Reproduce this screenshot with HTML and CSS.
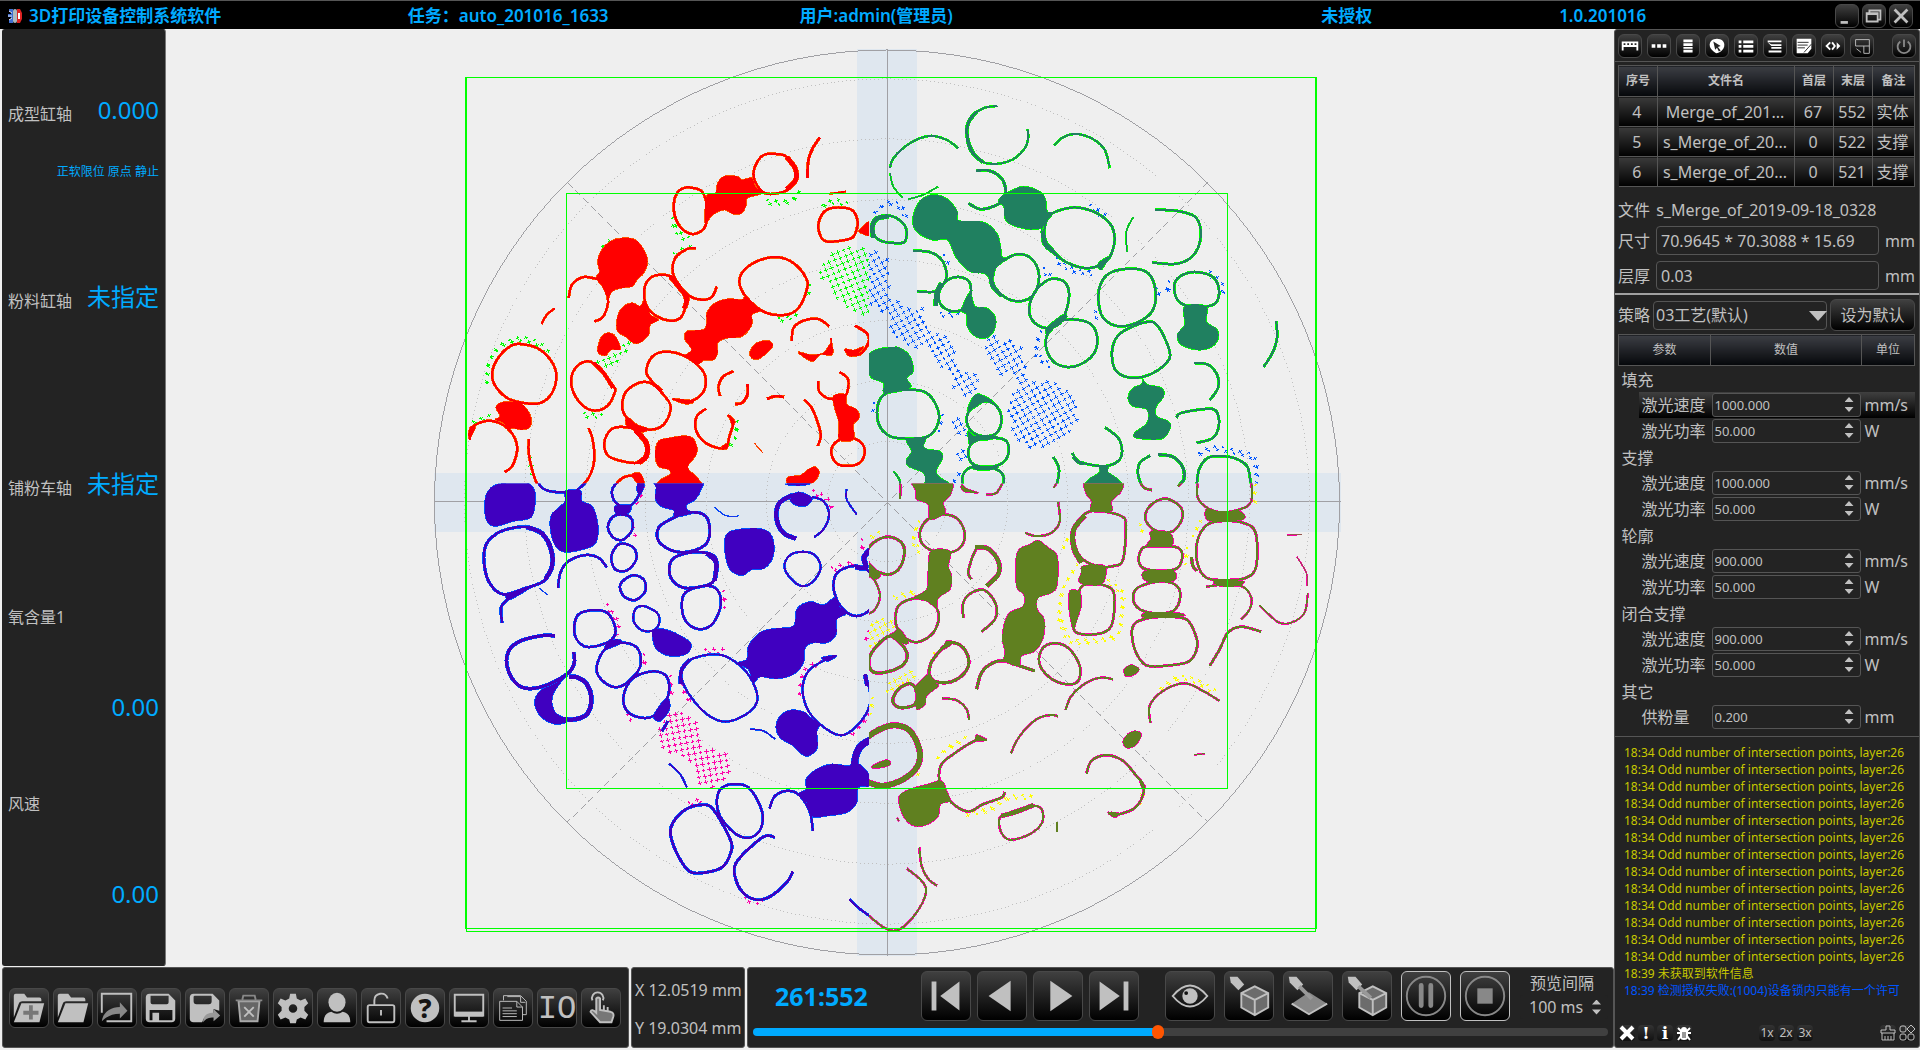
FILE: index.html
```
<!DOCTYPE html>
<html lang="zh-CN">
  <head>
    <meta charset="UTF-8" />
    <meta name="viewport" content="width=device-width, initial-scale=1.0" />
    <title>3D打印设备控制系统软件</title>
    <link rel="stylesheet" href="styles.css">
  </head>
  <body>
    <header class="titlebar">
      <svg class="logo" viewBox="0 0 16 16">
        <path d="M6 1H2v3h2v2H1v3h3v2H2v4h4z" fill="#3f6fd0" />
        <path d="M2 3l3 2M1 8h4M2 12l3-2" stroke="#dde" />
        <rect x="6" y="1" width="4" height="14" rx="2" fill="#aeb9bd" />
        <path d="M10 1h3l2 4v6l-2 4h-3z" fill="#d22" />
        <path d="M11 5h2v6h-2z" fill="#fff" />
      </svg>
      <h1 class="app-name">3D打印设备控制系统软件</h1>
      <span class="task">任务：auto_201016_1633</span>
      <span class="user">用户:admin(管理员)</span>
      <span class="licence">未授权</span>
      <span class="version">1.0.201016</span>
      <div class="window-buttons">
        <button class="btn small" aria-label="最小化"><svg viewBox="0 0 24 24"><path d="M5 19h8" class="line thick" /></svg></button>
        <button class="btn small" aria-label="还原"><svg viewBox="0 0 24 24"><path d="M4 9h12v9H4zM4 10h12M7 8V6h12v10h-2" class="line" /></svg></button>
        <button class="btn small" aria-label="关闭"><svg viewBox="0 0 24 24"><path d="M5 5l14 14M19 5L5 19" class="line thick" /></svg></button>
      </div>
    </header>

    <main class="workspace">
      <section class="axes panel">
        <div class="axis">
          <div class="axis-row"><span>成型缸轴</span><strong>0.000</strong></div>
          <p class="axis-state">正软限位 原点 静止</p>
        </div>
        <div class="axis">
          <div class="axis-row"><span>粉料缸轴</span><strong>未指定</strong></div>
        </div>
        <div class="axis">
          <div class="axis-row"><span>铺粉车轴</span><strong>未指定</strong></div>
        </div>
        <div class="sensor"><span>氧含量1</span><strong>0.00</strong></div>
        <div class="sensor"><span>风速</span><strong>0.00</strong></div>
      </section>

      <section class="view">
        <svg id="slice" viewBox="166 29 1448 939">
          <defs>
            <clipPath id="clip-tl"><rect x="400" y="40" width="469" height="444" /></clipPath>
            <clipPath id="clip-tr"><rect x="869" y="40" width="500" height="444" /></clipPath>
            <clipPath id="clip-bl"><rect x="400" y="484" width="469" height="480" /></clipPath>
            <clipPath id="clip-br"><rect x="869" y="484" width="500" height="480" /></clipPath>
          </defs>
          <rect class="band" x="857" y="49" width="60" height="908" />
          <rect class="band" x="434" y="473" width="907" height="60" />
          <g class="guides">
            <circle cx="887" cy="503" r="453" />
            <path d="M887.5 50v907M434 502.5h907" />
            <path class="dashed" d="M567 183l641 640M1208 183L567 823" />
            <g class="dotted">
              <circle cx="887" cy="502" r="60" />
              <circle cx="887" cy="502" r="121" />
              <circle cx="887" cy="502" r="181" />
              <circle cx="887" cy="502" r="242" />
              <circle cx="887" cy="502" r="302" />
              <circle cx="887" cy="502" r="363" />
              <circle cx="887" cy="502" r="423" />
            </g>
          </g>
          <g id="layers"></g>
          <g class="bounds">
            <path d="M566.5 193.5h661v596h-661z" />
            <path d="M465.5 77.5h851v852h-851z" />
            <path d="M466.5 77.5h849v855h-849z" />
          </g>
        </svg>
      </section>

      <aside class="side panel">
        <div class="side-tools">
          <button class="btn small" aria-label="标尺"><svg viewBox="0 0 24 24"><path d="M4 17V8h16v9M4 12h16M8 9v3M12 9v3M16 9v3" class="line white" /></svg></button>
          <button class="btn small" aria-label="横排"><svg viewBox="0 0 24 24"><path d="M4 10h4v4H4zM10 10h4v4h-4zM16 10h4v4h-4z" class="solid white" /></svg></button>
          <button class="btn small" aria-label="竖排"><svg viewBox="0 0 24 24"><path d="M7 5h10v3H7zM7 9h10v3H7zM7 13h10v2H7zM7 16h10v3H7z" class="solid white" /></svg></button>
          <button class="btn small" aria-label="拾取"><svg viewBox="0 0 24 24"><path d="M12 4c5 0 8 3 8 7 0 5-5 9-9 9-3-2-7-5-7-9s3-7 8-7z" class="solid white" /><path d="M8 7l8 5-3 1 3 4-2 1-2-4-2 2z" fill="#222" /></svg></button>
          <button class="btn small" aria-label="列表"><svg viewBox="0 0 24 24"><path d="M4 6h3v3H4zM9 6h11v3H9zM4 11h3v3H4zM9 11h11v3H9zM4 16h3v3H4zM9 16h11v3H9z" class="solid white" /></svg></button>
          <button class="btn small" aria-label="层级"><svg viewBox="0 0 24 24"><path d="M4 6h15v2H4zM8 10h11v2H8zM8 13h11v2H8zM5 17h14v2H5zM4 8l4 2v2z" class="solid white" /></svg></button>
          <button class="btn small" aria-label="记录"><svg viewBox="0 0 24 24"><path d="M4 4h16v11l-4 5H4z" class="solid white" /><path d="M5 8h12M5 11h11M5 14h8M20 10l-8 9" stroke="#222" stroke-width="1" /></svg></button>
          <button class="btn small" aria-label="切换"><svg viewBox="0 0 24 24"><path d="M9 8l-4 4 4 4M11 8l3 4-3 4" class="line white" /><path d="M16 8l4 4-4 4z" class="solid white" /></svg></button>
          <button class="btn small" aria-label="布局"><svg viewBox="0 0 24 24"><path d="M5 5h15v7H5zM14 12v8h6v-8M6 15l5 4" class="line thin" /></svg></button>
          <button class="btn small power" aria-label="电源"><svg viewBox="0 0 24 24"><path d="M12 5v8M8 7a7 7 0 1 0 8 0" class="line dim" /></svg></button>
        </div>

        <div class="files">
          <table class="file-table">
            <thead>
              <tr><th class="c-no">序号</th><th>文件名</th><th class="c-layer">首层</th><th class="c-layer">末层</th><th class="c-note">备注</th></tr>
            </thead>
            <tbody>
              <tr><td>4</td><td>Merge_of_201...</td><td>67</td><td>552</td><td>实体</td></tr>
              <tr><td>5</td><td>s_Merge_of_20...</td><td>0</td><td>522</td><td>支撑</td></tr>
              <tr><td>6</td><td>s_Merge_of_20...</td><td>0</td><td>521</td><td>支撑</td></tr>
            </tbody>
          </table>
          <p class="file-name"><span>文件</span> s_Merge_of_2019-09-18_0328</p>
          <div class="field"><label for="size">尺寸</label><input id="size" type="text" value="70.9645 * 70.3088 * 15.69"><span>mm</span></div>
          <div class="field"><label for="thickness">层厚</label><input id="thickness" type="text" value="0.03"><span>mm</span></div>
        </div>

        <div class="strategy">
          <div class="strategy-row">
            <label for="profile">策略</label>
            <span class="select"><select id="profile"><option>03工艺(默认)</option></select></span>
            <button class="btn default-btn">设为默认</button>
          </div>
          <table class="params">
            <thead>
              <tr><th class="c-param">参数</th><th>数值</th><th class="c-unit">单位</th></tr>
            </thead>
            <tbody>
              <tr class="group"><td colspan="3">填充</td></tr>
              <tr class="selected"><td><label for="p1">激光速度</label></td><td><span class="spin"><input id="p1" type="number" step="any" value="1000.000"><i></i></span></td><td>mm/s</td></tr>
              <tr><td><label for="p2">激光功率</label></td><td><span class="spin"><input id="p2" type="number" step="any" value="50.000"><i></i></span></td><td>W</td></tr>
              <tr class="group"><td colspan="3">支撑</td></tr>
              <tr><td><label for="p3">激光速度</label></td><td><span class="spin"><input id="p3" type="number" step="any" value="1000.000"><i></i></span></td><td>mm/s</td></tr>
              <tr><td><label for="p4">激光功率</label></td><td><span class="spin"><input id="p4" type="number" step="any" value="50.000"><i></i></span></td><td>W</td></tr>
              <tr class="group"><td colspan="3">轮廓</td></tr>
              <tr><td><label for="p5">激光速度</label></td><td><span class="spin"><input id="p5" type="number" step="any" value="900.000"><i></i></span></td><td>mm/s</td></tr>
              <tr><td><label for="p6">激光功率</label></td><td><span class="spin"><input id="p6" type="number" step="any" value="50.000"><i></i></span></td><td>W</td></tr>
              <tr class="group"><td colspan="3">闭合支撑</td></tr>
              <tr><td><label for="p7">激光速度</label></td><td><span class="spin"><input id="p7" type="number" step="any" value="900.000"><i></i></span></td><td>mm/s</td></tr>
              <tr><td><label for="p8">激光功率</label></td><td><span class="spin"><input id="p8" type="number" step="any" value="50.000"><i></i></span></td><td>W</td></tr>
              <tr class="group"><td colspan="3">其它</td></tr>
              <tr><td><label for="p9">供粉量</label></td><td><span class="spin"><input id="p9" type="number" step="any" value="0.200"><i></i></span></td><td>mm</td></tr>
            </tbody>
          </table>
        </div>

        <div class="log">
          <ul>
            <li>18:34 Odd number of intersection points, layer:26</li>
            <li>18:34 Odd number of intersection points, layer:26</li>
            <li>18:34 Odd number of intersection points, layer:26</li>
            <li>18:34 Odd number of intersection points, layer:26</li>
            <li>18:34 Odd number of intersection points, layer:26</li>
            <li>18:34 Odd number of intersection points, layer:26</li>
            <li>18:34 Odd number of intersection points, layer:26</li>
            <li>18:34 Odd number of intersection points, layer:26</li>
            <li>18:34 Odd number of intersection points, layer:26</li>
            <li>18:34 Odd number of intersection points, layer:26</li>
            <li>18:34 Odd number of intersection points, layer:26</li>
            <li>18:34 Odd number of intersection points, layer:26</li>
            <li>18:34 Odd number of intersection points, layer:26</li>
            <li>18:39 未获取到软件信息</li>
            <li class="info">18:39 检测授权失败:(1004)设备锁内只能有一个许可</li>
          </ul>
          <div class="log-tools">
            <button class="mini" aria-label="错误"><svg viewBox="0 0 16 16"><path d="M2 2l12 12M14 2L2 14" stroke="#fff" stroke-width="4" /></svg></button>
            <button class="mini mark">!</button>
            <button class="mini mark">i</button>
            <button class="mini bug" aria-label="调试"><svg viewBox="0 0 16 16"><path d="M1 8h14M2 3l3 3h6l3-3M2 15l3-4h6l3 4" class="line white" /><path d="M5 5a3 3 0 0 1 6 0zM4 6h8v6q0 3-4 3t-4-3z" class="solid white" /><path d="M7 7v6M9 7v6" stroke="#333" /></svg></button>
            <button class="mini">1x</button>
            <button class="mini">2x</button>
            <button class="mini zoom-last">3x</button>
            <button class="mini" aria-label="清空"><svg viewBox="0 0 16 16"><path d="M1 8V5h5V1h4v4h5v3zM2 8v7h12V8M5 11v4M8 11v4M11 11v4" class="line thin" /></svg></button>
            <button class="mini" aria-label="更多"><svg viewBox="0 0 16 16"><rect x="1" y="1" width="6" height="6" rx="2" class="line thin" /><path d="M12 0l4 4-4 4-4-4z" class="line thin" /><rect x="1" y="9" width="6" height="6" rx="2" class="line thin" /><rect x="9" y="9" width="6" height="6" rx="2" class="line thin" /></svg></button>
          </div>
        </div>
      </aside>

      <footer class="bottom">
        <nav class="toolbar panel">
          <button class="btn" aria-label="新建任务"><svg viewBox="0 0 40 40"><path d="M4 30V7q0-2 2-2h9l3 4h13q2 0 2 2v2H13q-3 0-4 3z" class="solid" /><path d="M12 15h24l-5 20H4z" class="solid" /><path d="M22 17v15M14 25h16" stroke="#777" stroke-width="4" /></svg></button>
          <button class="btn" aria-label="打开任务"><svg viewBox="0 0 40 40"><path d="M4 30V7q0-2 2-2h9l3 4h13q2 0 2 2v2H13q-3 0-4 3z" class="solid" /><path d="M12 15h24l-5 20H4z" class="solid" /></svg></button>
          <button class="btn" aria-label="导入"><svg viewBox="0 0 40 40"><path d="M4 25V5h31v29H9" class="line" /><path d="M4 34c1-9 9-15 19-15v-5l8 9-8 8v-5c-8 0-14 3-19 8z" fill="#888" /></svg></button>
          <button class="btn" aria-label="保存"><svg viewBox="0 0 40 40"><path d="M8 5h20l7 7v19q0 4-4 4H8q-4 0-4-4V9q0-4 4-4zm1 2v7q0 2 2 2h15q2 0 2-2V7zM8 22v11h3v-8h7v8h14V22z" fill-rule="evenodd" class="solid" /></svg></button>
          <button class="btn" aria-label="另存为"><svg viewBox="0 0 40 40"><path d="M8 5h20l7 7v11l-6-2v5q-9 0-12 9H8q-4 0-4-4V9q0-4 4-4zm0 3v5q0 3 3 3h13q3 0 3-3V8q0-1-1-1H9z" fill-rule="evenodd" class="solid" /><path d="M18 35c0-7 4-10 11-10v-4l7 7-7 6v-4c-5 0-8 1-11 5z" fill="#999" /></svg></button>
          <button class="btn" aria-label="删除"><svg viewBox="0 0 40 40"><path d="M9 13h22l-2 21H11z" fill="#666" stroke="#aaa" stroke-width="2" /><path d="M6 12h28M13 11l1-4h12l1 4" class="line dim" /><path d="M15 19l10 10M25 19L15 29" class="line" /></svg></button>
          <button class="btn" aria-label="设置"><svg viewBox="0 0 40 40"><path d="M17 5h6l1 5 4 2 5-2 3 5-4 4v4l4 4-3 5-5-2-4 2-1 4h-6l-1-4-4-2-5 2-3-5 4-4v-4l-4-4 3-5 5 2 4-2zM20 16a4 4 0 1 0 0 9 4 4 0 0 0 0-9z" fill-rule="evenodd" class="solid" /></svg></button>
          <button class="btn" aria-label="用户"><svg viewBox="0 0 40 40"><ellipse cx="20" cy="14" rx="9" ry="10" class="solid" /><path d="M6 35c0-7 3-10 8-11q6 4 12 0c5 1 8 4 8 11z" class="solid" /></svg></button>
          <button class="btn" aria-label="解锁"><svg viewBox="0 0 40 40"><rect x="6" y="17" width="28" height="18" rx="2" class="line" /><path d="M13 17v-5q0-6 6-7t8 5M20 22v6" class="line" /></svg></button>
          <button class="btn" aria-label="帮助"><svg viewBox="0 0 40 40"><circle cx="20" cy="20" r="15" class="solid" /><text x="20" y="30" class="glyph help">?</text></svg></button>
          <button class="btn" aria-label="监控"><svg viewBox="0 0 40 40"><path d="M5 6h30v22H5zM5 25h30M20 28v6M12 34h16" class="line" /><path d="M5 24h30v5H5z" class="solid" /></svg></button>
          <button class="btn" aria-label="日志"><svg viewBox="0 0 40 40"><path d="M10 12V7h18l6 6v14h-4M14 8h14v6h5" class="line thin" /><path d="M6 13h18l6 6v14H6zM24 13v6h6M9 20h10M9 23h15M9 26h15M9 29h15" class="line thin" /></svg></button>
          <button class="btn" aria-label="输入输出"><svg viewBox="0 0 40 40"><text x="20" y="31" class="glyph io">IO</text></svg></button>
          <button class="btn" aria-label="手动"><svg viewBox="0 0 40 40"><path d="M11 12a6 6 0 1 1 11 0" class="line" /><path d="M15 10q2-2 4 0v12l11 2q4 1 3 5l-2 6H19L9 24q1-4 6 1z" fill="#777" stroke="#c0c0c0" stroke-width="2" /><path d="M23 17v6M27 19v5" class="line" /></svg></button>
        </nav>
        <section class="coords panel">
          <span>X 12.0519 mm</span>
          <span>Y 19.0304 mm</span>
        </section>
        <section class="player panel">
          <div class="player-row">
            <output class="layer">261:552</output>
            <div class="play-group steps">
              <button class="btn big" aria-label="首层"><svg viewBox="0 0 50 50"><path d="M10 10h5v30h-5zM39 10v30L19 25z" class="solid" /></svg></button>
              <button class="btn big" aria-label="上一层"><svg viewBox="0 0 50 50"><path d="M34 9v32L11 25z" class="solid" /></svg></button>
              <button class="btn big" aria-label="下一层"><svg viewBox="0 0 50 50"><path d="M17 9v32l23-16z" class="solid" /></svg></button>
              <button class="btn big" aria-label="末层"><svg viewBox="0 0 50 50"><path d="M10 10v30l21-15zM35 10h5v30h-5z" class="solid" /></svg></button>
            </div>
            <div class="play-group modes">
              <button class="btn big" aria-label="预览"><svg viewBox="0 0 50 50"><path d="M7 25Q25 3 43 25 25 47 7 25z" class="line" /><circle cx="25" cy="25" r="8" class="solid" /><circle cx="21" cy="22" r="2" fill="#111" /></svg></button>
              <button class="btn big" aria-label="扫描实体"><svg viewBox="0 0 50 50"><path d="M5 5h8l7 8-6 6-8-8z" class="solid" /><path d="M17 22l14-7 14 7v15l-14 8-14-8z" fill="#6c6c6c" /><path d="M17 22l14-7 14 7v15l-14 8-14-8zM17 22l14 7 14-7M31 29v16" class="line" /></svg></button>
              <button class="btn big" aria-label="扫描单层"><svg viewBox="0 0 50 50"><path d="M8 33l18-12 19 12-19 11z" fill="#888" /><path d="M8 33l18 11 19-11" class="line" /><path d="M5 5h8l7 8-6 6-8-8z" class="solid" /><path d="M16 15l13 13" stroke="#999" stroke-width="4" /></svg></button>
              <button class="btn big" aria-label="打印"><svg viewBox="0 0 50 50"><path d="M5 5h8l7 8-6 6-8-8z" class="solid" /><path d="M17 22l14-7 14 7v15l-14 8-14-8z" fill="#6c6c6c" /><path d="M17 22l14-7 14 7v15l-14 8-14-8zM17 22l14 7 14-7M31 29v16" class="line" /><path d="M16 15l13 12" stroke="#999" stroke-width="4" /></svg></button>
              <button class="btn big active" aria-label="暂停"><svg viewBox="0 0 50 50"><circle cx="25" cy="25" r="20" class="line dim" /><path d="M20 14v21M30 14v21" stroke="#888" stroke-width="5" stroke-linecap="round" /></svg></button>
              <button class="btn big active" aria-label="停止"><svg viewBox="0 0 50 50"><circle cx="25" cy="25" r="20" class="line dim" /><path d="M17 17h16v16H17z" fill="#888" /></svg></button>
            </div>
            <div class="interval">
              <label for="interval">预览间隔</label>
              <span class="spin plain"><input id="interval" type="text" value="100 ms"><i></i></span>
            </div>
          </div>
          <input class="progress" type="range" min="0" max="552" value="261" aria-label="层进度" style="--pos: 47.3%">
        </section>
      </footer>
    </main>
    <script src="slice.js"></script>
  </body>
</html>
```
FILE: styles.css
```
* {
  box-sizing: border-box;
}
body {
  margin: 0;
  height: 100vh;
  display: flex;
  flex-direction: column;
  overflow: hidden;
  background: #efefef;
  color: #c0c0c0;
  font: 16px/20px "Noto Sans", "Noto Sans CJK SC", sans-serif;
}
button,
input,
select {
  font: inherit;
  color: inherit;
}
h1,
p,
ul {
  margin: 0;
  padding: 0;
}

/* title bar */
.titlebar {
  flex: 0 0 29px;
  display: grid;
  grid-template-columns: 16px 385fr 392fr 522fr 238fr 276fr auto;
  align-items: center;
  padding: 2px 7px 0 7px;
  background: #000;
  border-top: 1px solid #555;
  color: #00aaff;
  font-size: 17px;
  font-weight: 600;
  white-space: nowrap;
}
.logo {
  width: 16px;
  height: 16px;
}
.app-name {
  padding-left: 6px;
  font-size: 17px;
  font-weight: 600;
}
.window-buttons {
  display: flex;
  gap: 3px;
}

/* buttons and icons */
.btn {
  width: 40px;
  height: 40px;
  padding: 0;
  border: 1px solid #484848;
  border-radius: 6px;
  background: linear-gradient(#404040, #000);
  flex: none;
}
.btn svg {
  display: block;
  width: 100%;
  height: 100%;
}
.btn.small {
  width: 24px;
  height: 24px;
}
.btn.big {
  width: 50px;
  height: 50px;
}
.btn.active {
  border-color: #c0c0c0;
}
.solid {
  fill: #c0c0c0;
}
.line {
  fill: none;
  stroke: #c0c0c0;
  stroke-width: 2;
}
.line.thick {
  stroke-width: 3;
}
.line.thin {
  stroke-width: 1;
}
.line.dim {
  stroke: #888;
}
.solid.white {
  fill: #fff;
}
.line.white {
  stroke: #fff;
}
.glyph {
  text-anchor: middle;
}
.help {
  font-size: 28px;
  font-weight: 800;
  fill: #151515;
}
.io {
  font: 34px "Liberation Mono", monospace;
  fill: #c0c0c0;
}

/* main layout */
.workspace {
  flex: 1;
  min-height: 0;
  display: grid;
  grid-template: minmax(0, 1fr) 83px / 166px minmax(0, 1fr) 306px;
}
.panel {
  background: #232323;
  border: 1px solid #555;
  border-radius: 3px;
}

/* axis column */
.axes {
  display: grid;
  grid-auto-rows: 1fr;
  margin: 0 0 1px 2px;
  border-color: #232323 #777 #232323 #232323;
}
.axis,
.sensor {
  padding: 0 6px 0 5px;
}
.axis {
  padding-top: 64px;
}
.axis-row {
  display: flex;
  justify-content: space-between;
  align-items: center;
}
.axis-row span {
  padding-top: 8px;
}
.axes strong {
  font-size: 24px;
  line-height: 32px;
  font-weight: 400;
  color: #00aaff;
}
.axis-state {
  margin-top: 36px;
  font-size: 12px;
  text-align: right;
  color: #00aaff;
}
.sensor {
  display: flex;
  flex-direction: column;
  padding-top: 16px;
}
.sensor strong {
  margin-top: 64px;
  text-align: right;
}

/* slice view */
.view {
  background: #efefef;
}
.view svg {
  display: block;
  width: 100%;
  height: 100%;
  shape-rendering: crispEdges;
}
.band {
  fill: #dfe7ef;
}
.guides {
  fill: none;
  stroke: #a0a0a4;
}
.dashed {
  stroke-dasharray: 7 4;
}
.dotted {
  stroke: #c0c0c0;
  stroke-dasharray: 1 3;
}
.bounds {
  fill: none;
  stroke: #00ff00;
}
.tl {
  --core: #ff0000;
  --edge: #ff5500;
  --support: #00ff00;
}
.tr {
  --core: #208060;
  --edge: #00ff00;
  --support: #0055ff;
}
.bl {
  --core: #4000c0;
  --edge: #0055ff;
  --support: #ff00aa;
}
.br {
  --core: #608020;
  --edge: #ff00aa;
  --support: #ffff00;
}
.blob.edge {
  fill: var(--edge);
  stroke: var(--edge);
  stroke-width: 4;
}
.blob.core {
  fill: var(--core);
}
.wall,
.outline {
  fill: none;
}
.wall.edge {
  stroke: var(--edge);
}
.wall.core {
  stroke: var(--core);
}
.cross {
  fill: none;
  stroke: var(--support);
  stroke-width: 3;
}

/* right column */
.side {
  grid-row: 1 / 3;
  grid-column: 3;
  display: flex;
  flex-direction: column;
  margin-bottom: 2px;
}
.side-tools {
  display: flex;
  gap: 5px;
  padding: 4px 3px 3px 3px;
  border-bottom: 1px solid #555;
}
.power {
  margin-left: auto;
}
.files {
  padding: 3px 4px 3px 3px;
  border-bottom: 2px solid #a0a0a0;
}
table {
  width: 100%;
  table-layout: fixed;
  border-collapse: collapse;
  text-align: center;
}
th {
  height: 31px;
  padding: 0;
  border: 1px solid #555;
  background: linear-gradient(#3c3e44, #05070a);
  font-size: 12px;
  font-weight: 600;
}
.file-table td {
  height: 30px;
  padding: 0 2px 0 0;
  border-right: 1px solid #555;
  border-bottom: 1px solid #555;
  background: linear-gradient(#3a3a3a, #000);
  white-space: nowrap;
}
.c-no {
  width: 39px;
}
.c-layer {
  width: 39px;
}
.c-note {
  width: 42px;
}
.file-name {
  padding: 13px 0 6px;
}
.file-name span {
  display: inline-block;
  width: 34px;
}
.field {
  display: grid;
  grid-template-columns: 38px 1fr 36px;
  align-items: center;
  margin-bottom: 6px;
}
.field span {
  text-align: right;
}
.field input {
  width: 100%;
  height: 29px;
  padding: 0 4px;
  border: 1px solid #555;
  border-radius: 4px;
  background: none;
}
.field:last-child {
  margin-bottom: 0;
}
.strategy {
  padding: 4px 4px 6px 3px;
  border-bottom: 1px solid #555;
}
.strategy-row {
  display: flex;
  align-items: center;
  gap: 3px;
  margin-bottom: 3px;
}
.select {
  position: relative;
  flex: 1;
}
.select::after {
  content: "";
  position: absolute;
  right: 0;
  top: 10px;
  border: 9px solid transparent;
  border-top: 10px solid #c0c0c0;
  border-bottom: 0;
  pointer-events: none;
}
select {
  appearance: none;
  width: 100%;
  height: 29px;
  padding: 0 2px;
  border: 1px solid #555;
  border-radius: 4px;
  background: #232323;
}
.default-btn {
  width: 85px;
  height: 32px;
}
.c-param {
  width: 92px;
}
.c-unit {
  width: 53px;
}
.params th {
  font-weight: 400;
}
.params td {
  height: 26px;
  padding: 0;
  text-align: left;
}
.params td:first-child {
  padding-left: 0;
}
.params .group td {
  padding: 2px 0 0 4px;
}
.params td:last-child {
  padding-left: 3px;
}
.params label {
  display: block;
  margin-left: 20px;
  padding: 3px 0 3px 3px;
}
.params .selected td:not(:first-child),
.selected label {
  background: linear-gradient(#404040, #000);
}
.spin {
  display: flex;
  align-items: center;
  width: 149px;
  height: 24px;
  margin-left: 1px;
  padding: 0 6px 0 2px;
  border: 1px solid #555;
  border-radius: 3px;
  background: #232323;
  font-size: 13px;
}
.spin input {
  flex: 1;
  min-width: 0;
  padding: 0;
  border: 0;
  background: none;
  appearance: textfield;
}
.spin input::-webkit-inner-spin-button {
  appearance: none;
}
/* up and down arrows */
.spin i {
  width: 9px;
  height: 15px;
  background: #c0c0c0;
  clip-path: polygon(50% 0, 100% 33%, 0 33%, 50% 0, 50% 100%, 0 67%, 100% 67%, 50% 100%);
}
.spin.plain {
  width: 88px;
  margin: 2px 0 0;
  border-color: transparent;
  font-size: 16px;
}

/* log */
.log {
  flex: 1;
  min-height: 0;
  display: flex;
  flex-direction: column;
  justify-content: space-between;
  padding: 7px 4px 6px;
}
.log ul {
  list-style: none;
  padding-left: 5px;
  font-size: 12px;
  line-height: 17px;
  color: #c8c800;
  white-space: nowrap;
  overflow: hidden;
}
.log .info {
  color: #0055ff;
}
.log-tools {
  display: flex;
  align-items: center;
  gap: 3px;
}
.mini {
  width: 16px;
  height: 16px;
  padding: 0;
  border: 0;
  background: linear-gradient(#333, #111);
  border-radius: 4px;
  font-size: 12px;
  line-height: 16px;
}
.mini svg {
  display: block;
}
.mark {
  color: #fff;
  font: bold 17px/16px "DejaVu Serif", serif;
}
.bug {
  margin-right: 64px;
}
.zoom-last {
  margin-right: auto;
}

/* bottom bar */
.bottom {
  grid-column: 1 / 3;
  display: grid;
  grid-template-columns: 627px 114px minmax(0, 1fr);
  gap: 2px;
  padding: 0 0 2px 2px;
}
.toolbar {
  display: flex;
  align-items: center;
  gap: 4px;
  padding-left: 6px;
}
.coords {
  display: flex;
  flex-direction: column;
  justify-content: space-between;
  padding: 12px 3px 9px;
  white-space: nowrap;
}
.player {
  display: flex;
  flex-direction: column;
  justify-content: space-between;
  padding: 3px 5px 8px 5px;
}
.player-row {
  display: flex;
  align-items: center;
}
.layer {
  flex: 1;
  padding-left: 22px;
  color: #00aaff;
  font-size: 25px;
  font-weight: 700;
}
.play-group {
  display: flex;
  gap: 6px;
}
.modes {
  gap: 9px;
  margin: 0 10px 0 26px;
}
.interval {
  width: 88px;
}
.interval label {
  display: block;
  padding-left: 10px;
}
.interval input {
  padding-left: 6px;
}
.progress {
  appearance: none;
  width: 100%;
  height: 14px;
  margin: 0;
  background: none;
}
.progress::-webkit-slider-runnable-track {
  height: 8px;
  border-radius: 4px;
  background: linear-gradient(90deg, #00aaff var(--pos), #404040 var(--pos));
}
.progress::-webkit-slider-thumb {
  appearance: none;
  width: 12px;
  height: 14px;
  margin-top: -3px;
  border-radius: 6px;
  background: #ff5500;
}
```
FILE: slice.js
```
// Slice data, one block per laser field, three units per view pixel.
// walls: [width, points], a trailing "z" closes the contour.
const fields = [
  {
    name: "tl", x: 440, y: 60, tilt: -22,
    blobs: [
      "800,408 826,402 832,372 852,350 890,350 905,360 935,355 945,380 965,400 920,415 918,435 905,460 880,463 855,450 830,457 812,470 795,490",
      "545,535 585,540 610,570 622,605 610,640 590,660 575,680 540,685 515,695 503,715 490,685 468,655 478,635 472,605 485,570 510,545",
      "575,730 600,740 612,725 630,765 655,780 630,795 625,825 600,848 580,850 555,830 532,815 530,780 545,745",
      "505,820 525,830 540,868 512,870 495,888 475,880 472,865 485,830",
      "862,718 905,720 915,712 935,735 960,752 935,765 935,795 905,830 860,835 832,850 832,880 820,900 790,902 772,915 755,900 735,888 755,870 735,840 740,815 790,810 800,785 800,760 825,730",
      "200,1027 238,1030 260,1050 273,1080 265,1105 240,1110 215,1105 205,1115 190,1090 165,1080 180,1070 167,1045 180,1030",
      "720,1130 752,1132 768,1155 768,1185 745,1215 745,1230 775,1260 780,1290 650,1290 660,1262 690,1245 685,1230 655,1220 645,1185 655,1145 690,1135",
      "985,843 998,858 985,875 955,898 935,895 930,875 950,850",
      "1180,1010 1215,1005 1220,1035 1250,1050 1257,1075 1240,1095 1240,1140 1198,1140 1197,1090 1185,1050",
      "1125,1222 1137,1240 1120,1268 1080,1276 1042,1270 1045,1252 1080,1248 1105,1230",
      "1257,512 1290,485 1290,525 1270,523",
      "1075,877 1110,885 1150,880 1173,850 1176,885 1140,885 1120,905 1095,895",
      "560,1072 590,1095 625,1108 600,1118 560,1100",
      "88,1105 105,1102 88,1135",
      "697,1018 750,1022 760,1028 735,1033",
      "862,1067 885,1085 875,1095 868,1075",
      "845,1162 865,1150 860,1168",
      "575,1245 600,1242 612,1275 590,1268",
      "1215,868 1240,872 1270,862 1245,888 1225,888"
    ],
    walls: [
      [8, "1000,282 1035,288 1060,320 1065,355 1050,385 1015,400 975,400 950,375 940,340 955,300 975,284 z"],
      [15, "1040,292 1065,325 1067,360 1040,388"],
      [8, "750,383 785,395 800,440 795,500 765,522 735,515 710,485 700,440 710,400 730,385 z"],
      [8, "1195,443 1235,450 1252,480 1248,515 1230,537 1160,545 1138,520 1138,480 1160,450 z"],
      [8, "385,715 395,675 430,652 470,658"],
      [8, "490,680 503,715 500,745 485,775 462,785"],
      [7, "343,746 320,765 303,793"],
      [8, "240,853 290,865 330,900 348,945 335,1000 300,1030 250,1030 200,1015 160,970 158,925 185,880 215,857 z"],
      [8, "445,905 475,925 520,980 523,1000 500,1040 465,1053 430,1040 400,1000 393,955 410,920 z"],
      [12, "460,910 490,940 518,985"],
      [8, "665,645 700,655 730,700 735,740 720,775 690,783 650,770 620,740 612,690 630,655 z"],
      [15, "690,650 715,680 740,715 733,745"],
      [8, "767,565 740,568 705,595 698,640 720,680 750,710 785,720 815,712 830,680"],
      [8, "1010,592 1060,610 1098,655 1100,690 1075,745 1040,765 980,760 930,725 900,680 905,640 950,605 z"],
      [8, "697,1018 745,1026 785,1003 797,965 785,930 735,890 675,876 635,892 618,935 635,965 665,992"],
      [8, "610,967 640,975 685,1025 690,1055 670,1095 635,1110 590,1100 550,1060 550,1010 575,980 z"],
      [8, "540,1102 590,1112 620,1150 622,1185 600,1208 560,1208 505,1190 492,1150 510,1112 z"],
      [16, "585,1112 618,1150 618,1190 595,1210"],
      [8, "88,1140 90,1108 125,1087 160,1085 200,1105 225,1140 230,1175 215,1220 192,1238"],
      [8, "265,1138 265,1180 275,1230 290,1272 310,1290"],
      [8, "445,1105 457,1140 462,1200 445,1255 410,1290"],
      [8, "1055,845 1060,805 1090,783 1135,778 1168,800"],
      [6, "1173,835 1175,870"],
      [9, "1245,798 1280,820 1287,845 1265,880 1238,885 1215,870"],
      [9, "1140,232 1118,265 1105,300 1102,355"],
      [6, "1168,402 1218,395"],
      [8, "880,935 850,950 835,980 840,1010"],
      [9, "922,973 922,1005 905,1030 885,1033"],
      [9, "980,1018 1005,1010 1033,1012"],
      [8, "798,1047 770,1070 767,1110 790,1145 825,1163 857,1165 868,1130 880,1085 862,1067"],
      [8, "1092,1020 1115,1045 1135,1095 1142,1130 1133,1160"],
      [8, "1135,965 1137,995 1160,1015 1180,1018 1215,1010 1225,980 1222,955 1198,937"],
      [8, "1200,1140 1235,1135 1268,1155 1272,1190 1250,1215 1205,1218 1180,1200 1175,1165 z"],
      [3, "942,1150 968,1180"],
      [8, "520,1290 535,1265 560,1250 595,1255 610,1290"]
    ],
    areas: [
      "1250,560 1285,570 1290,740 1265,765 1215,745 1180,700 1145,660 1130,640 1150,600 1200,572",
      "540,850 580,850 540,900 490,925 470,910 510,880"
    ],
    trails: [
      "140,975 145,910 180,860 235,838 290,850 335,895",
      "980,425 1030,428 1070,410 1080,380",
      "695,480 715,520 750,540",
      "1145,440 1180,425 1230,435",
      "700,585 730,570 760,562",
      "485,565 510,545",
      "430,1065 490,1070",
      "890,1090 885,1140 865,1160",
      "1108,680 1105,715",
      "1015,780 1070,770",
      "95,1090 150,1070",
      "268,1200 275,1240"
    ]
  },
  {
    name: "tr", x: 860, y: 60, tilt: -30,
    blobs: [
      "230,405 265,420 292,455 297,483 370,487 410,520 422,560 425,590 440,597 410,620 398,660 385,650 370,640 330,635 290,595 270,550 255,538 215,540 170,515 158,480 175,430 200,410",
      "490,380 540,395 557,420 562,455 580,460 555,490 545,505 500,508 440,485 432,440 415,425 430,405 445,397",
      "330,700 345,740 380,745 405,770 405,805 385,832 350,832 322,800 320,765 305,750",
      "100,863 120,865 150,890 160,935 140,955 150,985 75,1000 70,970 35,955 23,925 25,885 60,867",
      "140,1140 195,1135 190,1160 205,1170 240,1175 248,1195 230,1230 235,1250 265,1270 272,1290 175,1290 195,1270 190,1240 145,1220 140,1200 155,1175",
      "975,740 1040,740 1040,785 1072,810 1075,840 1050,865 1010,870 965,855 953,825 975,795",
      "850,960 862,975 905,985 912,1010 890,1040 890,1070 925,1085 932,1105 905,1138 830,1135 825,1120 862,1090 862,1050 820,1040 805,1015 820,985 845,975",
      "355,1003 400,1025 375,1025 325,1055 335,1020",
      "720,1220 745,1220 745,1238 775,1260 785,1290 675,1290 690,1258 718,1240",
      "325,1115 345,1130 410,1130 390,1140 345,1145 330,1160",
      "340,1215 375,1222 415,1218 400,1230 345,1230",
      "610,765 620,775 590,795 565,825 560,805",
      "715,612 745,592 725,630",
      "545,505 560,545 605,595 570,575 548,550"
    ],
    walls: [
      [8, "75,467 110,475 138,505 135,545 105,550 60,542 38,515 45,480 z"],
      [15, "85,469 50,477 37,500 40,535"],
      [7, "413,138 370,145 330,175 320,215 330,270 365,305 410,312 460,298 495,265 505,235 503,207"],
      [11, "350,155 325,190 322,230 340,280 370,308"],
      [7, "295,265 260,240 210,228 150,250 100,295 90,325"],
      [5, "90,340 100,380 128,415"],
      [5, "145,418 190,405 235,380"],
      [7, "583,257 610,232 650,222 700,238 735,270 750,325"],
      [9, "347,333 385,332 420,350 437,385 430,420 400,440 360,448 325,430"],
      [8, "640,443 700,455 745,485 762,515 762,560 740,605 690,625 650,620 600,595 560,550 555,500 575,462 z"],
      [5, "820,473 800,515 802,577"],
      [8, "885,450 950,453 1005,470 1023,510 1015,565 985,600 940,613 877,608"],
      [8, "475,583 515,597 537,640 530,690 505,718 465,724 425,705 398,665 405,625 440,597 z"],
      [12, "390,640 398,680 425,708"],
      [8, "580,657 615,668 628,705 615,765 595,795 560,805 525,790 508,755 520,705 550,670 z"],
      [8, "650,780 695,795 713,840 700,885 660,915 620,922 580,905 558,860 565,820 600,785 z"],
      [8, "815,627 865,640 887,690 880,750 840,785 780,800 735,780 718,740 720,680 750,640 z"],
      [8, "860,787 895,800 930,875 920,910 870,945 820,955 775,940 758,905 762,850 790,815 z"],
      [8, "1010,637 1060,652 1078,690 1068,730 1030,742 980,738 950,715 945,670 970,645 z"],
      [8, "1250,785 1253,830 1245,865 1230,895 1212,922"],
      [8, "1003,910 1045,915 1072,945 1075,985 1050,1022"],
      [8, "950,1075 965,1060 1040,1048 1070,1055 1078,1095 1060,1135 1010,1150"],
      [8, "735,1103 775,1135 787,1175 775,1205 735,1220 690,1215 655,1205 637,1180"],
      [12, "640,1190 655,1207 672,1212"],
      [8, "580,1192 597,1225 592,1270 580,1285"],
      [8, "872,1188 840,1210 835,1245 850,1290"],
      [10, "895,1185 940,1192 970,1225 972,1260 955,1280"],
      [8, "1010,1290 1018,1230 1045,1195 1090,1190 1135,1200 1165,1225 1175,1290"],
      [8, "160,573 210,577 245,600 260,640 255,665 230,695 170,695"],
      [8, "300,652 330,670 330,715 305,750 270,753 240,730 240,690 265,660 z"],
      [14, "228,740 230,700 245,670"],
      [8, "150,990 200,1000 232,1045 235,1090 205,1130 150,1137 90,1130 55,1090 55,1030 85,998 z"],
      [8, "375,1025 410,1040 425,1080 410,1120 370,1130 335,1115 320,1080 335,1045 z"],
      [8, "400,1135 440,1145 445,1185 420,1215 370,1222 335,1210 325,1175 345,1145 z"],
      [8, "310,1290 308,1250 330,1225 375,1222 420,1235 432,1260 425,1290"],
      [6, "100,1235 118,1260 122,1290"]
    ],
    areas: [
      "30,570 75,590 90,640 90,700 150,740 190,745 205,800 280,850 290,920 355,950 360,975 320,1020 285,990 265,940 225,910 195,865 150,865 95,820 90,780 30,735 22,700",
      "380,830 405,815 420,845 465,840 505,910 500,950 560,965 625,990 650,1045 640,1110 540,1165 480,1145 450,1090 450,1010 475,985 455,945 420,960 385,900",
      "275,1075 320,1080 325,1130 280,1110",
      "290,1165 325,1170 320,1210 285,1205"
    ],
    trails: [
      "40,460 85,430 120,440 140,480",
      "1015,1185 1065,1165 1130,1178 1180,1195 1195,1270",
      "925,670 925,705",
      "1050,640 1085,675 1090,710",
      "590,600 640,630 700,640",
      "540,820 530,880 575,920",
      "550,630 570,650",
      "240,765 300,765",
      "245,1070 240,1110",
      "890,690 905,700",
      "280,1270 300,1240",
      "690,440 735,470",
      "705,760 720,780",
      "250,590 262,615",
      "40,1035 42,1055"
    ]
  },
  {
    name: "bl", x: 440, y: 470, tilt: -10,
    blobs: [
      "230,38 265,42 283,65 283,110 270,145 220,155 165,170 140,155 133,115 140,70 170,45",
      "375,65 420,63 425,95 455,110 470,150 472,200 455,230 385,248 350,235 332,190 332,140 355,115 375,95",
      "650,30 780,30 782,60 765,90 740,105 742,122 760,130 705,142 700,122 665,112 646,90 648,55",
      "885,182 960,178 995,200 1000,255 975,295 935,300 905,318 870,300 855,250 857,200",
      "1075,68 1115,85 1100,108 1070,108 1050,90",
      "1110,397 1150,407 1185,385 1200,415 1220,432 1190,450 1188,495 1160,520 1120,520 1095,535 1090,580 1060,615 1010,628 960,622 940,640 925,600 890,582 920,570 925,530 960,490 1000,478 1060,470 1070,420",
      "640,480 690,485 745,515 752,535 735,555 690,560 655,545 640,520",
      "525,110 570,108 565,130 530,135",
      "1058,722 1095,730 1110,745 1140,765 1130,785 1132,835 1110,858 1090,858 1060,830 1020,805 1008,770 1025,735",
      "1175,885 1225,890 1250,880 1290,920 1290,950 1255,955 1250,1000 1220,1030 1160,1040 1118,1042 1100,1000 1075,975 1098,960 1098,930 1130,900",
      "380,620 360,640 335,685 345,730 380,750 370,762 335,762 300,740 283,700 300,665 340,645",
      "500,520 530,510 545,520 500,540 490,548",
      "640,740 680,685 688,720 660,755",
      "1145,565 1190,558 1165,575",
      "595,38 612,45 600,75 590,60",
      "1040,42 1110,42 1080,48 1045,46",
      "200,375 250,358 285,345 210,390"
    ],
    walls: [
      [9, "255,172 295,185 330,225 335,290 310,335 250,358 190,375 150,345 132,290 135,230 165,195 205,178 z"],
      [14, "260,173 305,192 332,240 335,290 315,330"],
      [9, "245,365 200,392 182,415 185,460"],
      [8, "280,0 290,30 305,55 340,67 400,66 430,45 455,20"],
      [8, "353,355 360,310 385,275 435,257 475,265 500,295"],
      [8, "555,22 590,35 598,70 575,105 545,110 520,90 518,55 z"],
      [8, "540,135 572,145 576,180 550,210 520,205 503,175 515,145 z"],
      [8, "545,222 580,235 588,270 560,303 525,300 513,265 525,235 z"],
      [8, "575,318 610,330 615,365 585,392 550,380 540,345 z"],
      [9, "740,130 790,135 808,170 800,220 755,245 700,245 655,215 655,175 690,150 z"],
      [9, "770,248 820,258 832,290 820,335 790,350 730,355 692,325 690,280 715,258 z"],
      [14, "800,252 828,280 823,335"],
      [8, "790,350 830,360 842,405 820,460 780,480 740,460 725,415 735,370 z"],
      [8, "450,423 500,430 525,475 515,510 470,530 430,530 403,495 410,440 z"],
      [8, "550,520 590,535 602,575 590,610 545,650 505,648 470,610 480,560 510,528 z"],
      [8, "630,607 675,617 687,655 675,700 640,740 600,745 560,725 550,680 575,630 z"],
      [7, "610,410 650,430 657,460 640,483 605,483 580,455 585,420 z"],
      [7, "820,555 865,565 920,610 950,670 945,710 900,745 850,757 800,735 750,680 725,630 730,590 760,567 z"],
      [12, "720,645 725,600 750,570"],
      [14, "385,622 410,624 440,645 453,690 440,735 405,750 370,750"],
      [11, "343,500 310,498 240,515 205,545 200,590 225,640 265,658 325,645 385,610 402,580 400,548"],
      [14, "1068,208 1030,190 1010,150 1015,105 1045,82 1075,75"],
      [7, "1115,82 1150,95 1167,135 1150,180 1122,203"],
      [7, "1090,247 1125,258 1142,295 1120,335 1085,350 1050,325 1033,290 1050,257 z"],
      [6, "1220,57 1220,90 1250,135"],
      [3, "823,112 855,138 895,140"],
      [8, "1250,290 1290,310 1318,370 1290,420 1250,440 1210,420 1183,370 1185,320 1210,298 z"],
      [16, "1290,240 1272,265 1277,295 1245,292"],
      [7, "1160,570 1110,600 1088,650 1100,715 1140,765 1200,798 1245,775 1285,720 1290,670 1275,615"],
      [13, "1275,615 1282,650"],
      [5, "930,780 970,785 1005,810"],
      [6, "686,883 720,915 740,955"],
      [8, "890,945 925,955 960,1010 968,1055 950,1095 910,1105 870,1080 835,1030 833,975 855,950 z"],
      [9, "785,1007 820,1022 870,1110 872,1150 845,1195 780,1212 740,1200 700,1130 692,1075 730,1025 z"],
      [9, "1005,1105 970,1103 900,1165 882,1205 900,1260 940,1290 985,1285 1040,1240 1058,1207"],
      [8, "988,1018 1005,980 1045,965 1080,980 1110,1030 1118,1085"],
      [8, "1228,1290 1260,1320 1345,1380"],
      [22, "1300,808 1258,835 1244,890 1265,930"],
      [9, "665,787 683,755"],
      [3, "295,355 322,377"]
    ],
    areas: [
      "700,725 735,725 775,775 790,830 850,850 875,895 850,935 815,955 770,935 745,870 680,855 655,790"
    ],
    trails: [
      "500,410 535,465 530,490",
      "850,370 855,420",
      "1175,300 1240,280",
      "690,625 695,680",
      "610,560 615,590",
      "795,545 850,545",
      "1140,580 1090,610 1078,690",
      "1120,68 1160,90 1180,125",
      "580,180 590,200",
      "610,60 585,110",
      "745,1005 785,992",
      "915,1290 970,1300",
      "1285,490 1275,520",
      "1285,740 1230,800",
      "725,650 750,700",
      "560,740 580,750",
      "1265,215 1270,250"
    ]
  },
  {
    name: "br", x: 850, y: 470, tilt: -28,
    blobs: [
      "190,30 300,35 302,75 280,100 285,130 240,150 235,105 200,90 198,65",
      "243,245 300,245 295,290 305,320 300,360 265,385 260,415 230,395 190,385 230,360 235,300",
      "565,213 595,235 622,260 622,345 605,370 565,385 562,420 583,450 580,505 555,545 515,560 508,590 465,575 465,545 457,500 475,435 520,410 522,375 500,350 502,250 540,225",
      "710,30 812,30 815,65 785,95 785,125 725,125 725,95 708,70",
      "700,290 765,290 755,345 690,340 695,310",
      "905,185 960,190 965,228 895,228 903,210",
      "885,305 970,305 970,335 890,335",
      "890,430 980,430 1000,440 885,445",
      "1070,120 1110,130 1170,125 1180,150 1080,155",
      "1095,335 1180,335 1165,350 1110,350",
      "235,945 275,935 290,965 300,995 272,1005 265,1040 240,1062 200,1072 170,1055 150,1015 148,980 180,960",
      "845,587 868,600 850,618 828,620 823,600",
      "865,787 875,800 855,830 830,835 820,815 840,790",
      "70,888 110,872 122,885 105,893 70,897",
      "235,615 255,640 265,650 230,680 225,705 200,720 200,680 195,655",
      "50,275 90,315 72,330 50,310",
      "130,490 150,480 175,520 150,520 120,500",
      "380,797 410,812 380,815",
      "660,365 690,370 694,410 680,455 670,480 658,420",
      "290,515 310,520 280,540",
      "775,1030 808,1032 795,1045",
      "870,935 887,950 878,958",
      "335,45 350,57 385,70 340,65"
    ],
    walls: [
      [8, "285,135 325,150 345,195 330,235 295,250 250,245 215,220 212,180 240,145 z"],
      [9, "115,202 155,220 163,255 145,300 110,315 65,295 50,255 70,220 z"],
      [7, "60,310 80,345 90,380 75,420 50,437"],
      [8, "195,387 245,400 267,440 250,490 205,518 165,505 138,465 145,410 z"],
      [10, "120,500 150,520 172,555 155,590 100,610 65,605 57,570 80,530 z"],
      [10, "300,520 340,535 357,580 335,620 290,640 245,630 240,590 265,550 z"],
      [10, "180,643 200,665 195,705 150,715 128,695 145,660 z"],
      [18, "50,805 90,780 135,768 180,785 208,840 203,890 160,930 100,950 56,940"],
      [7, "130,5 150,40 150,90"],
      [7, "525,190 560,200 605,190 630,155 625,98"],
      [8, "380,235 365,270 355,310 365,330"],
      [14, "375,233 415,238 445,275 445,315 410,350"],
      [8, "340,445 340,400 365,370 405,363 438,405 435,450 395,487"],
      [8, "745,123 815,140 828,170 820,270 790,290 740,290 690,260 672,200 690,150 710,130 z"],
      [16, "705,138 672,180 672,235 695,280"],
      [8, "720,343 770,350 793,375 788,460 760,490 700,495 672,480 685,430 690,360 z"],
      [8, "945,87 990,110 998,145 970,185 920,185 887,150 900,110 z"],
      [8, "930,230 985,235 998,265 975,300 890,300 867,275 880,235 z"],
      [8, "920,337 975,345 992,380 970,425 900,430 855,405 858,360 z"],
      [8, "950,442 1010,450 1035,490 1043,530 1020,575 960,588 890,588 855,540 848,475 880,450 z"],
      [7, "1045,30 1043,80 1065,110 1110,128 1170,120 1205,95 1205,30"],
      [8, "1110,155 1180,160 1218,190 1220,290 1190,325 1130,332 1070,325 1043,280 1043,215 1070,168 z"],
      [10, "1025,262 1030,290 1042,305"],
      [7, "1070,352 1130,345 1180,352 1205,385 1200,420 1175,450"],
      [4, "1312,197 1358,195"],
      [4, "1342,262 1370,310 1373,350"],
      [6, "1375,370 1365,430 1325,460 1285,458 1230,408"],
      [8, "1080,590 1110,540 1135,490 1175,472 1235,487"],
      [10, "380,660 395,610 430,580 470,575 510,590 555,605"],
      [8, "620,522 660,540 690,590 685,635 650,645 600,625 568,580 580,535 z"],
      [7, "647,722 665,680 710,640 755,625 790,630"],
      [7, "483,852 510,800 560,750 605,737 625,742"],
      [7, "277,687 320,693 350,720 358,753"],
      [7, "902,760 900,710 940,665 1005,642 1060,665 1110,695"],
      [8, "410,812 380,812 310,855 272,890 272,950 305,1000 355,1027 400,1005 455,985 465,968"],
      [8, "710,913 725,875 770,858 820,875 860,920 882,950 875,990 850,1020 795,1038 775,1030"],
      [7, "545,1010 575,1020 577,1060 540,1095 480,1112 452,1085 450,1045 480,1030 z"],
      [14, "455,1040 500,1028 550,1008"],
      [6, "622,1060 622,1090"],
      [5, "1033,857 1067,853"],
      [7, "0,1290 56,1340 110,1380 150,1380 200,1330 228,1270 215,1235 170,1198"],
      [7, "208,1135 215,1190 235,1230 262,1250"],
      [6, "140,1045 148,1057"],
      [7, "408,75 440,70 462,30"],
      [7, "625,30 612,55"],
      [8, "860,10 880,52 907,62"],
      [8, "1005,30 985,50"]
    ],
    areas: [
      "56,470 130,440 140,480 80,530 56,540",
      "130,620 170,600 210,630 170,645 130,665 110,680 115,650"
    ],
    trails: [
      "60,205 90,190",
      "205,160 190,210 210,245",
      "130,385 200,368",
      "640,240 655,200",
      "680,290 640,360 630,440 660,510 720,515 800,500 815,450 815,370 760,330",
      "1010,240 1010,290",
      "1050,160 1030,200",
      "930,660 990,625 1050,640 1100,670",
      "260,870 290,840 350,805",
      "345,1035 420,1020 480,985 545,985",
      "880,960 875,1000",
      "200,900 210,915",
      "1215,50 1215,110",
      "65,690 65,740",
      "250,555 240,600",
      "870,170 880,180"
    ]
  }
];

const NS = "http://www.w3.org/2000/svg";
const PITCH = 18;

function add(parent, tag, attrs) {
  const el = document.createElementNS(NS, tag);
  for (const key in attrs) el.setAttribute(key, attrs[key]);
  parent.appendChild(el);
  return el;
}

// smooth curve through every listed point
function curve(text, closed) {
  const p = text.replace(" z", "").split(" ").map((s) => s.split(",").map(Number));
  const n = p.length;
  const at = (i) => (closed ? p[(i + n) % n] : p[Math.max(0, Math.min(n - 1, i))]);
  let d = "M" + p[0];
  for (let i = 0; i < (closed ? n : n - 1); i++) {
    const [a, b, c, e] = [at(i - 1), at(i), at(i + 1), at(i + 2)];
    const c1 = [0, 1].map((k) => (b[k] + (c[k] - a[k]) / 6).toFixed(1));
    const c2 = [0, 1].map((k) => (c[k] - (e[k] - b[k]) / 6).toFixed(1));
    d += "C" + c1 + " " + c2 + " " + c;
  }
  return closed ? d + "z" : d;
}

// one support cross, turned by the hatch angle
function cross(x, y, cos, sin, r) {
  const u = [r * cos, r * sin];
  return (
    `M${x - u[0]} ${y - u[1]}L${x + u[0]} ${y + u[1]}` +
    `M${x + u[1]} ${y - u[0]}L${x - u[1]} ${y + u[0]}`
  );
}

function supports(g, f) {
  const cos = Math.cos((f.tilt * Math.PI) / 180);
  const sin = Math.sin((f.tilt * Math.PI) / 180);
  let d = "";
  f.areas.forEach((a) => {
    const shape = add(g, "path", { d: curve(a, true), class: "outline" });
    for (let i = -90; i < 90; i++) {
      for (let j = -90; j < 90; j++) {
        const x = 700 + (i * cos - j * sin) * PITCH;
        const y = 700 + (i * sin + j * cos) * PITCH;
        if (shape.isPointInFill(new DOMPoint(x, y))) d += cross(x, y, cos, sin, (i + j) % 3 ? 7 : 5);
      }
    }
  });
  f.trails.forEach((t) => {
    const line = add(g, "path", { d: curve(t, false), class: "outline" });
    const end = line.getTotalLength();
    for (let s = 0, k = 0; s <= end; s += 13, k++) {
      const p = line.getPointAtLength(s);
      const shift = k % 2 ? 6 : -5;
      d += cross(p.x + shift * sin, p.y + shift * cos, cos, sin, k % 3 ? 6 : 4);
    }
  });
  add(g, "path", { class: "cross", d });
}

const layers = document.getElementById("layers");

fields.forEach((f) => {
  const outer = add(layers, "g", { class: f.name, "clip-path": `url(#clip-${f.name})` });
  const g = add(outer, "g", { transform: `translate(${f.x} ${f.y}) scale(${1 / 3})` });
  supports(g, f);
  ["edge", "core"].forEach((part) => {
    f.walls.forEach(([w, pts]) => {
      const width = part === "edge" ? w + 1 : Math.max(w - 2, 0);
      add(g, "path", { class: "wall " + part, d: curve(pts, pts.endsWith("z")), "stroke-width": width });
    });
    f.blobs.forEach((b) => add(g, "path", { class: "blob " + part, d: curve(b, true) }));
  });
});
```
